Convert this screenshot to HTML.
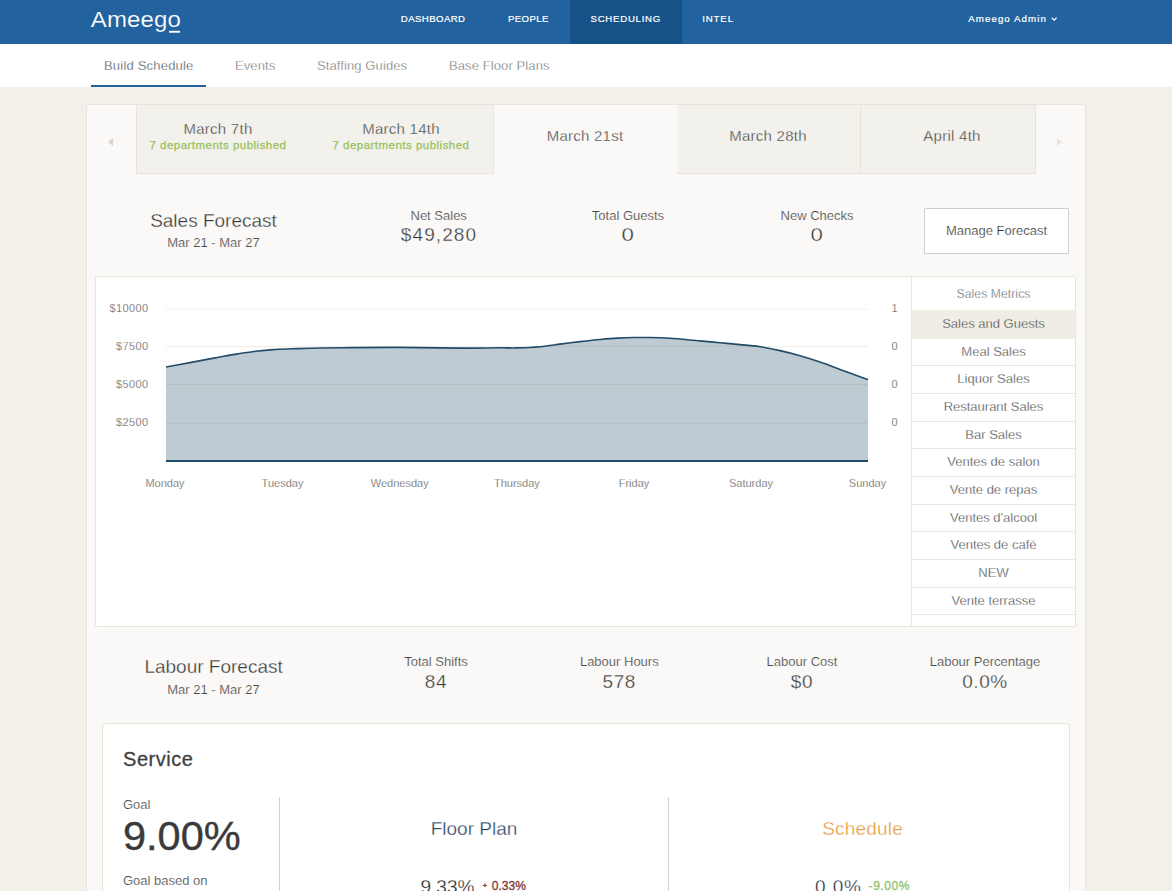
<!DOCTYPE html>
<html lang="en">
<head>
<meta charset="utf-8">
<title>Ameego - Build Schedule</title>
<style>
*{box-sizing:border-box;margin:0;padding:0}
html,body{width:1172px;height:891px;overflow:hidden}
body{background:#f3efe9;font-family:"Liberation Sans",Arial,sans-serif;color:#555;font-size:13px;position:relative}
.abs{position:absolute}
.c{position:absolute;text-align:center;white-space:nowrap;transform:translateX(-50%)}
/* header */
#hdr{position:absolute;left:0;top:0;width:1172px;height:44px;background:#22629e}
#logo{position:absolute;left:90.8px;top:5.2px;font-size:24px;line-height:28px;color:#fff;letter-spacing:.12px;white-space:nowrap;transform:scaleY(.95);transform-origin:0 22.3px;-webkit-text-stroke:.18px #22629e}
#logo i{position:absolute;left:78.6px;top:25.6px;width:10.4px;height:2px;background:#fff;display:block}
.nav{position:absolute;top:0;height:44px;line-height:37.1px;color:#fff;font-size:9.6px;letter-spacing:.43px;white-space:nowrap;-webkit-text-stroke:.22px #fff}
#nav-act{position:absolute;left:570px;top:0;width:112px;height:44px;background:#165288}
#user{position:absolute;left:968.3px;top:0;height:44px;line-height:37.1px;color:#fff;font-size:9.7px;letter-spacing:1.07px;white-space:nowrap;-webkit-text-stroke:.22px #fff}
/* subnav */
#sub{position:absolute;left:0;top:44px;width:1172px;height:43px;background:#fff}
.tab{position:absolute;top:0;height:43px;line-height:43px;font-size:13px;color:#707070;-webkit-text-stroke:.3px #fff;white-space:nowrap;letter-spacing:.1px}
.tab.on{color:#3d4852;letter-spacing:.2px}
#ul{position:absolute;left:91px;top:41px;width:115px;height:2px;background:#22629e}
/* main card */
#card{position:absolute;left:86px;top:104px;width:1000px;height:800px;background:#faf9f7;border:1px solid #e8e4d9;border-radius:3px}
#tabs{position:absolute;left:136px;top:104px;width:900px;height:70px;overflow:hidden;border-left:1px solid #e8e4d9}
.dt{position:absolute;top:0;height:70px;background:#f3f1ec;border:1px solid #e8e4d9;border-left:none}
.dt.on{background:#faf9f7;border-color:transparent;border-top-color:#e8e4d9}
.dname{font-size:15px;color:#404040;letter-spacing:.25px;-webkit-text-stroke:.3px #f3f1ec}
.dpub{font-size:11.5px;color:#97c158;letter-spacing:.48px;-webkit-text-stroke:.25px #97c158}
.arr{position:absolute;width:0;height:0;border-top:4px solid transparent;border-bottom:4px solid transparent}
/* forecast rows */
.h2{font-size:19px;color:#383838;line-height:22px;-webkit-text-stroke:.3px #faf9f7}
.sm{font-size:13px;color:#484848;line-height:15px;-webkit-text-stroke:.18px #faf9f7}
.num{font-size:19px;color:#383838;line-height:22px;letter-spacing:.6px;-webkit-text-stroke:.3px #faf9f7}
#btn{position:absolute;left:924px;top:208px;width:145px;height:46px;border:1px solid #cfcfcf;background:#fff;line-height:44px;text-align:center;font-size:13px;color:#333;-webkit-text-stroke:.22px #fff;border-radius:1px}
/* chart */
#chart{position:absolute;left:95px;top:276px;width:981px;height:351px;background:#fff;border:1px solid #eae5da;border-radius:1.5px}
#side{position:absolute;left:911px;top:277px;width:164px;height:349px;border-left:1px solid #ebe7e0;overflow:hidden}
#side .hd{height:33px;line-height:34.2px;text-align:center;font-size:12px;color:#4f5b68;letter-spacing:.15px;-webkit-text-stroke:.3px #fff}
#side .it{height:27.67px;line-height:25.6px;text-align:center;font-size:13px;color:#3b3e42;-webkit-text-stroke:.3px #fff;border-bottom:1px solid #ebe7e0}
#side .it.on{background:#f0ede4;border-bottom-color:#f0ede4;-webkit-text-stroke-color:#f0ede4;height:28.67px;line-height:28.2px}
/* service */
#svc{position:absolute;left:102px;top:723px;width:968px;height:200px;background:#fff;border:1px solid #e8e4d9;border-radius:4px}
.vl{position:absolute;width:1px;background:#d0d0d0;top:797px;height:100px}
</style>
</head>
<body>

<div id="hdr">
  <div id="logo">Ameego<i></i></div>
  <div id="nav-act"></div>
  <div class="nav" style="left:400.8px">DASHBOARD</div>
  <div class="nav" style="left:507.9px">PEOPLE</div>
  <div class="nav" style="left:590.5px;letter-spacing:.76px">SCHEDULING</div>
  <div class="nav" style="left:702.2px;letter-spacing:.9px">INTEL</div>
  <div id="user">Ameego Admin <svg width="6.4" height="4.4" viewBox="0 0 6.4 4.4" style="vertical-align:.2px;margin-left:0"><path d="M.8 .8 L3.2 3.1 L5.6 .8" fill="none" stroke="#fff" stroke-width="1.3"/></svg></div>
</div>

<div id="sub">
  <div class="tab on" style="left:104px">Build Schedule</div>
  <div class="tab" style="left:235px">Events</div>
  <div class="tab" style="left:317px">Staffing Guides</div>
  <div class="tab" style="left:449px">Base Floor Plans</div>
  <div id="ul"></div>
</div>

<div id="card"></div>

<div id="tabs">
  <div class="dt" style="left:-11px;width:368px"></div>
  <div class="dt on" style="left:357px;width:183px"></div>
  <div class="dt" style="left:540px;width:184px"></div>
  <div class="dt" style="left:724px;width:175px"></div>
</div>
<div class="c dname" style="left:218px;top:120px">March 7th</div>
<div class="c dpub" style="left:218px;top:139px">7 departments published</div>
<div class="c dname" style="left:401px;top:120px">March 14th</div>
<div class="c dpub" style="left:401px;top:139px">7 departments published</div>
<div class="c dname" style="left:585px;top:127px;-webkit-text-stroke-color:#faf9f7">March 21st</div>
<div class="c dname" style="left:768px;top:127px">March 28th</div>
<div class="c dname" style="left:952px;top:127px">April 4th</div>
<div class="arr" style="left:108.4px;top:137.8px;border-right:5.2px solid #d9d4cb"></div>
<div class="arr" style="left:1057.2px;top:138px;border-left:5.2px solid #e8e4dc"></div>

<!-- Sales forecast row -->
<div class="c h2" style="left:213.5px;top:210px">Sales Forecast</div>
<div class="c sm" style="left:213.5px;top:235px">Mar 21 - Mar 27</div>
<div class="c sm" style="left:438.7px;top:208px">Net Sales</div>
<div class="c num" style="left:439px;top:224px;letter-spacing:1.1px">$49,280</div>
<div class="c sm" style="left:628px;top:208px">Total Guests</div>
<div class="c num" style="left:628.3px;top:224px;transform:translateX(-50%) scaleX(1.17)">0</div>
<div class="c sm" style="left:817px;top:208px">New Checks</div>
<div class="c num" style="left:817.3px;top:224px;transform:translateX(-50%) scaleX(1.17)">0</div>
<div id="btn">Manage Forecast</div>

<!-- Chart -->
<div id="chart"></div>
<svg class="abs" style="left:96px;top:277px" width="815" height="349" viewBox="96 277 815 349" font-family="Liberation Sans, Arial, sans-serif">
  <g stroke="#f2eee5" stroke-width="1">
    <line x1="165.5" x2="868" y1="309.1" y2="309.1"/>
    <line x1="165.5" x2="868" y1="346.5" y2="346.5"/>
    <line x1="165.5" x2="868" y1="384.5" y2="384.5"/>
    <line x1="165.5" x2="868" y1="423.2" y2="423.2"/>
  </g>
  <path d="M166.0 367.0C170.0 366.3 181.9 364.1 189.9 362.6C197.9 361.1 205.8 359.6 213.8 358.1C221.8 356.7 230.7 355.0 237.7 353.9C244.7 352.8 249.6 352.0 255.6 351.3C261.6 350.6 267.5 350.0 273.5 349.6C279.5 349.2 280.3 349.1 291.4 348.8C302.5 348.5 321.9 347.9 340.0 347.7C358.1 347.5 380.0 347.3 400.0 347.4C420.0 347.5 443.3 348.0 460.0 348.1C476.7 348.2 490.5 347.8 500.0 347.8C509.5 347.8 510.3 348.1 517.0 347.9C523.7 347.7 532.8 347.3 540.0 346.7C547.2 346.1 553.3 345.0 560.0 344.1C566.7 343.2 573.3 342.4 580.0 341.6C586.7 340.8 593.8 340.1 600.0 339.5C606.2 338.9 611.3 338.4 617.0 338.1C622.7 337.8 628.5 337.6 634.0 337.5C639.5 337.4 644.0 337.4 650.0 337.5C656.0 337.6 661.7 337.7 670.0 338.3C678.3 338.9 691.7 340.2 700.0 340.9C708.3 341.6 713.3 342.1 720.0 342.7C726.7 343.3 734.8 344.1 740.0 344.6C745.2 345.1 747.7 345.2 751.0 345.6C754.3 346.0 755.2 345.9 760.0 346.7C764.8 347.5 773.3 349.1 780.0 350.6C786.7 352.1 793.3 353.8 800.0 355.7C806.7 357.6 813.3 359.7 820.0 362.0C826.7 364.3 833.3 366.9 840.0 369.4C846.7 371.8 855.3 375.0 860.0 376.7C864.7 378.4 866.7 379.1 868.0 379.6L868 461L166 461Z" fill="#224c67" fill-opacity=".29"/>
  <path d="M166.0 367.0C170.0 366.3 181.9 364.1 189.9 362.6C197.9 361.1 205.8 359.6 213.8 358.1C221.8 356.7 230.7 355.0 237.7 353.9C244.7 352.8 249.6 352.0 255.6 351.3C261.6 350.6 267.5 350.0 273.5 349.6C279.5 349.2 280.3 349.1 291.4 348.8C302.5 348.5 321.9 347.9 340.0 347.7C358.1 347.5 380.0 347.3 400.0 347.4C420.0 347.5 443.3 348.0 460.0 348.1C476.7 348.2 490.5 347.8 500.0 347.8C509.5 347.8 510.3 348.1 517.0 347.9C523.7 347.7 532.8 347.3 540.0 346.7C547.2 346.1 553.3 345.0 560.0 344.1C566.7 343.2 573.3 342.4 580.0 341.6C586.7 340.8 593.8 340.1 600.0 339.5C606.2 338.9 611.3 338.4 617.0 338.1C622.7 337.8 628.5 337.6 634.0 337.5C639.5 337.4 644.0 337.4 650.0 337.5C656.0 337.6 661.7 337.7 670.0 338.3C678.3 338.9 691.7 340.2 700.0 340.9C708.3 341.6 713.3 342.1 720.0 342.7C726.7 343.3 734.8 344.1 740.0 344.6C745.2 345.1 747.7 345.2 751.0 345.6C754.3 346.0 755.2 345.9 760.0 346.7C764.8 347.5 773.3 349.1 780.0 350.6C786.7 352.1 793.3 353.8 800.0 355.7C806.7 357.6 813.3 359.7 820.0 362.0C826.7 364.3 833.3 366.9 840.0 369.4C846.7 371.8 855.3 375.0 860.0 376.7C864.7 378.4 866.7 379.1 868.0 379.6" fill="none" stroke="#224b69" stroke-width="1.6"/>
  <line x1="166" x2="868" y1="461" y2="461" stroke="#224b69" stroke-width="2"/>
  <g font-size="11" fill="#505050" stroke="#fff" stroke-width=".25" text-anchor="end" letter-spacing=".4">
    <text x="148.5" y="312">$10000</text>
    <text x="148.5" y="350">$7500</text>
    <text x="148.5" y="388">$5000</text>
    <text x="148.5" y="426">$2500</text>
  </g>
  <g font-size="11" fill="#505050" stroke="#fff" stroke-width=".25" text-anchor="start">
    <text x="891.4" y="312.1">1</text>
    <text x="891.4" y="350.4">0</text>
    <text x="891.4" y="388.3">0</text>
    <text x="891.4" y="426.3">0</text>
  </g>
  <g font-size="11" fill="#505050" stroke="#fff" stroke-width=".25" text-anchor="middle">
    <text x="165" y="487">Monday</text>
    <text x="282.5" y="487">Tuesday</text>
    <text x="399.7" y="487">Wednesday</text>
    <text x="516.9" y="487">Thursday</text>
    <text x="634" y="487">Friday</text>
    <text x="751" y="487">Saturday</text>
    <text x="867.5" y="487">Sunday</text>
  </g>
</svg>
<div id="side">
  <div class="hd">Sales Metrics</div>
  <div class="it on">Sales and Guests</div>
  <div class="it">Meal Sales</div>
  <div class="it">Liquor Sales</div>
  <div class="it">Restaurant Sales</div>
  <div class="it">Bar Sales</div>
  <div class="it">Ventes de salon</div>
  <div class="it">Vente de repas</div>
  <div class="it">Ventes d'alcool</div>
  <div class="it">Ventes de café</div>
  <div class="it">NEW</div>
  <div class="it">Vente terrasse</div>
</div>

<!-- Labour forecast row -->
<div class="c h2" style="left:213.6px;top:656px">Labour Forecast</div>
<div class="c sm" style="left:213.5px;top:682px">Mar 21 - Mar 27</div>
<div class="c sm" style="left:436px;top:654px">Total Shifts</div>
<div class="c num" style="left:436px;top:671px">84</div>
<div class="c sm" style="left:619.3px;top:654px">Labour Hours</div>
<div class="c num" style="left:619.3px;top:671px">578</div>
<div class="c sm" style="left:802px;top:654px">Labour Cost</div>
<div class="c num" style="left:802px;top:671px">$0</div>
<div class="c sm" style="left:985px;top:654px">Labour Percentage</div>
<div class="c num" style="left:985px;top:671px">0.0%</div>

<!-- Service card -->
<div id="svc"></div>
<div class="abs" style="left:123px;top:747.2px;font-size:20px;line-height:24px;color:#3f3f3f;-webkit-text-stroke:.3px #3f3f3f;letter-spacing:.55px">Service</div>
<div class="abs sm" style="left:123px;top:797px;-webkit-text-stroke-color:#fff">Goal</div>
<div class="abs" style="left:123px;top:813px;font-size:41.5px;line-height:46px;color:#3a3a3a;-webkit-text-stroke:.4px #3a3a3a;letter-spacing:0">9.00%</div>
<div class="abs sm" style="left:123px;top:873px;-webkit-text-stroke-color:#fff">Goal based on</div>
<div class="vl" style="left:279px"></div>
<div class="vl" style="left:668px"></div>
<div class="c h2" style="left:474px;top:818px;color:#2b4661;-webkit-text-stroke-color:#fff">Floor Plan</div>
<div class="c h2" style="left:862.6px;top:818px;color:#e59a3e;letter-spacing:.2px;-webkit-text-stroke-color:#fff">Schedule</div>
<div class="abs num" style="left:420.5px;top:876.2px;color:#222;letter-spacing:0;-webkit-text-stroke:.3px #fff">9.33%</div>
<div class="abs" style="left:482.7px;top:881.2px;font-size:7.5px;color:#7c3a33;line-height:10px;-webkit-text-stroke:.3px #7c3a33">+</div>
<div class="abs" style="left:491.8px;top:880.3px;font-size:12px;color:#7c3a33;line-height:13px;white-space:nowrap;-webkit-text-stroke:.3px #7c3a33">0.33%</div>
<div class="abs num" style="left:815px;top:876.2px;color:#1f3044;letter-spacing:.9px;-webkit-text-stroke:.3px #fff">0.0%</div>
<div class="abs" style="left:868.6px;top:880.3px;font-size:12px;color:#8fc26a;line-height:13px;white-space:nowrap;letter-spacing:.55px;-webkit-text-stroke:.3px #8fc26a">-9.00%</div>

</body>
</html>
